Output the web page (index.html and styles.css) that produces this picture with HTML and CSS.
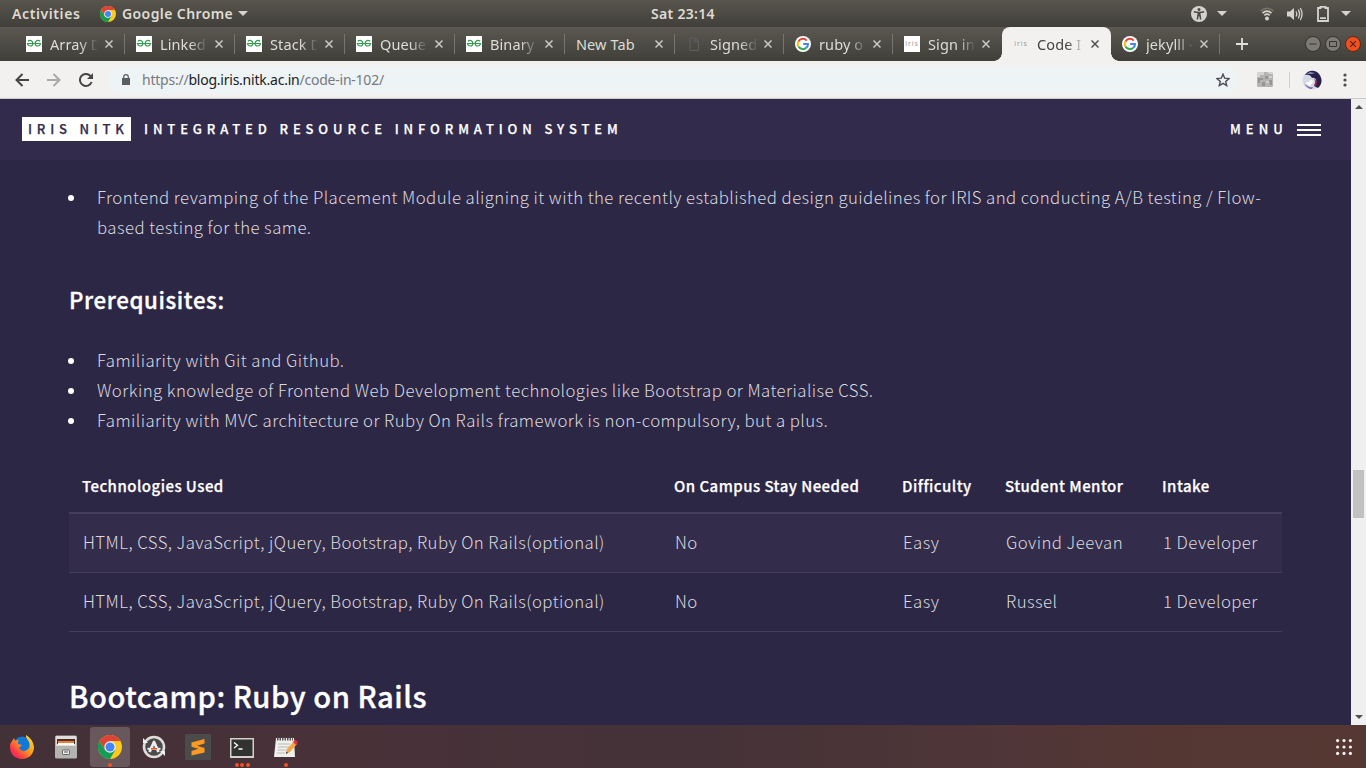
FILE: index.html
```html
<!DOCTYPE html>
<html lang="en">
<head>
<meta charset="utf-8">
<title>Code In 102</title>
<link rel="stylesheet" href="styles.css">
</head>
<body>
<svg class="defs" aria-hidden="true">
  <symbol id="chrome" viewBox="0 0 24 24">
    <circle cx="12" cy="12" r="12" fill="#fbc91f"/>
    <path d="M1.6 6A12 12 0 0 1 22.4 6H12L6.8 15Z" fill="#db4437"/>
    <path d="M1.6 6A12 12 0 0 0 12 24l5.2-9H6.8Z" fill="#129c58"/>
    <circle cx="12" cy="12" r="5.7" fill="#f3f3f3"/><circle cx="12" cy="12" r="4.5" fill="#4285f4"/>
  </symbol>
  <symbol id="gfg" viewBox="0 0 16 16">
    <path d="M0 0h16v16H0z" fill="#fff"/>
    <path d="M1.800 5.200c2-1.500 4.900-.9 5.100 2.100.1 1.700-1 2.700-2.500 2.700S1.700 9 1.500 7.500H14.500C14.300 9 13.100 10 11.600 10S9 9 9.100 7.300C9.300 4.300 12.200 3.700 14.200 5.200" fill="none" stroke="#339a4e" stroke-width="1.200"/>
  </symbol>
  <symbol id="google" viewBox="0 0 16 16">
    <circle cx="8" cy="8" r="8" fill="#fff"/>
    <g fill="none" stroke-width="2"><path d="M3.500 5.400A5 5 0 0 1 11.700 4.600" stroke="#ea4335"/><path d="M3.500 5.400a5 5 0 0 0 0 5.200" stroke="#fbbc05"/><path d="M3.500 10.600a5 5 0 0 0 7.800 1.200" stroke="#34a853"/><path d="M11.300 11.800A5 5 0 0 0 13 8H8.200" stroke="#4285f4"/></g>
  </symbol>
  <symbol id="close" viewBox="0 0 8 8"><path d="M.5.5l7 7m0-7l-7 7" fill="none" stroke="currentColor" stroke-width="1.500"/></symbol>
</svg>

<header class="topbar">
  <div class="topbar-left"><span class="activities">Activities</span><svg class="app-icon"><use href="#chrome"/></svg><span class="app-name">Google Chrome</span><i class="caret"></i></div>
  <div class="clock">Sat 23:14</div>
  <div class="tray">
    <svg width="16" height="16" viewBox="0 0 16 16"><circle cx="8" cy="8" r="8" fill="#d5d3cd"/><g fill="none" stroke="#4c4a44" stroke-width="1.500"><path d="M2.800 5.800Q8 7.300 13.200 5.800M6.300 13.500L7 9.500h2l.7 4"/><path d="M8 6v4" stroke-width="3"/></g><circle cx="8" cy="3.400" r="1.500" fill="#4c4a44"/></svg>
    <i class="caret"></i>
    <svg class="wifi" width="14" height="14" viewBox="0 0 14 14" fill="none" stroke="#d5d3cd" stroke-width="1.600"><path d="M.7 4.200Q7-1.700 13.300 4.200" stroke="#777568"/><path d="M2.500 6.200Q7 2 11.500 6.200M4.300 8.400Q7 6 9.700 8.400"/><circle cx="7" cy="11.500" r="1.200" fill="#d5d3cd"/></svg>
    <svg class="volume" width="16" height="14" viewBox="0 0 16 14"><path d="M0 4.500h3L7 1v12L3 9.500H0z" fill="#d5d3cd"/><path d="M9 4.500q1.500 2.500 0 5M11.300 2.700q2.500 4.300 0 8.600M13.300 1q3.500 6 0 12" fill="none" stroke="#d5d3cd" stroke-width="1.300"/></svg>
    <svg class="battery" width="12" height="16" viewBox="0 0 12 16"><path d="M3.500 2V.8h5V2H11v13H1V2zM3 12.200h6" fill="none" stroke="#d5d3cd" stroke-width="1.800"/></svg>
    <i class="caret"></i>
  </div>
</header>

<nav class="tabs">
  <div class="tab"><svg class="fav"><use href="#gfg"/></svg><span class="title">Array D</span><svg class="x"><use href="#close"/></svg></div>
  <div class="tab"><svg class="fav"><use href="#gfg"/></svg><span class="title">Linked</span><svg class="x"><use href="#close"/></svg></div>
  <div class="tab"><svg class="fav"><use href="#gfg"/></svg><span class="title">Stack D</span><svg class="x"><use href="#close"/></svg></div>
  <div class="tab"><svg class="fav"><use href="#gfg"/></svg><span class="title">Queue</span><svg class="x"><use href="#close"/></svg></div>
  <div class="tab"><svg class="fav"><use href="#gfg"/></svg><span class="title">Binary</span><svg class="x"><use href="#close"/></svg></div>
  <div class="tab"><span class="title full">New Tab</span><svg class="x"><use href="#close"/></svg></div>
  <div class="tab narrow"><svg class="fav" viewBox="0 0 16 16"><path d="M4 2h5l3.500 3.500V14.500H4zM9 2v3.500h3.500" fill="none" stroke="#5f5f60"/></svg><span class="title">Signed</span><svg class="x"><use href="#close"/></svg></div>
  <div class="tab narrow"><svg class="fav"><use href="#google"/></svg><span class="title">ruby o</span><svg class="x"><use href="#close"/></svg></div>
  <div class="tab narrow last"><span class="fav iris white">iris</span><span class="title">Sign in</span><svg class="x"><use href="#close"/></svg></div>
  <div class="tab narrow active"><span class="fav iris">iris</span><span class="title">Code I</span><svg class="x"><use href="#close"/></svg></div>
  <div class="tab narrow"><svg class="fav"><use href="#google"/></svg><span class="title">jekylll -</span><svg class="x"><use href="#close"/></svg></div>
  <svg class="plus" viewBox="0 0 12 12"><path d="M6 0v12M0 6h12" stroke="#e3e1da" stroke-width="1.800"/></svg>
  <div class="window-buttons">
    <svg viewBox="0 0 16 16"><circle cx="8" cy="8" r="7.500" fill="#7d7b73" stroke="#35342f"/><path d="M4.500 8h7" stroke="#35342f"/></svg>
    <svg viewBox="0 0 16 16"><circle cx="8" cy="8" r="7.500" fill="#7d7b73" stroke="#35342f"/><path d="M4.500 5.500h7v5h-7z" fill="none" stroke="#35342f"/></svg>
    <svg viewBox="0 0 16 16"><circle cx="8" cy="8" r="7.500" fill="#f0501e" stroke="#5a2b19"/><path d="M5.200 5.200l5.600 5.600m0-5.600l-5.600 5.600" stroke="#542313" stroke-width="1.200"/></svg>
  </div>
</nav>

<div class="toolbar">
  <svg class="back" viewBox="0 0 14 14"><path d="M14 7H1.500M7.500 1L1.500 7l6 6" fill="none" stroke="#454545" stroke-width="2"/></svg>
  <svg class="forward" viewBox="0 0 14 14"><path d="M0 7h12.500M6.500 1l6 6-6 6" fill="none" stroke="#aaa9a7" stroke-width="2"/></svg>
  <svg class="reload" viewBox="0 0 14 14"><path d="M12.600 9A6 6 0 1 1 11.400 2.900L13 4.500" fill="none" stroke="#454545" stroke-width="2"/><path d="M14 0v6H8z" fill="#454545"/></svg>
  <div class="omnibox">
    <svg class="lock" viewBox="0 0 8 11"><path d="M0 4h8v7H0z" fill="#5a5d62"/><path d="M1.700 4.500V3a2.300 2.300 0 0 1 4.600 0v1.500" fill="none" stroke="#5a5d62" stroke-width="1.200"/></svg>
    <span class="url">https://<b>blog.iris.nitk.ac.in</b>/code-in-102/</span>
    <svg class="star" viewBox="0 0 14 14"><path d="M7 1.200l1.700 4 4.300.4-3.300 2.800 1 4.200L7 10.400l-3.700 2.200 1-4.200L1 5.600l4.300-.4z" fill="none" stroke="#4b4e53" stroke-width="1.400"/></svg>
  </div>
  <svg class="extension" viewBox="0 0 16 15"><rect width="16" height="15" rx="1.500" fill="#b5b4b2"/><path d="M0 0h7v3H3v2H0zM10 0h6v2h-4z" fill="#d5d4d2"/><path d="M1 6h5v2H3v3H1zM8 4h3v3H8zM12 8h3v5h-2zM5 10h3v4H5z" fill="#969593"/><path d="M9 9h3v2H9zM12 4h3v2h-3z" fill="#d0cfcd"/></svg>
  <i class="divider"></i>
  <svg class="avatar" viewBox="0 0 20 20"><circle cx="10" cy="10" r="9.500" fill="#d5d9e6"/><path d="M3 5C6 0 13-1 17 4c4 5 3 11-1 14l-4-2 2-3c1-3-1-6-4-5-1-3-4-4-7-3z" fill="#27204a"/><path d="M11 7l4 5-1 4-2-1c2-3 1-5-1-8z" fill="#b51f4e"/><path d="M5 4l3-2 5 1-3 1z" fill="#8e88b8"/><path d="M7 12c1-3 4-3 4 0l-3 4-5-3" fill="#fff"/><path d="M2 13q4 5 9 4l-1 2Q5 19 2 13" fill="#7271a0"/></svg>
  <svg class="kebab" viewBox="0 0 4 14" fill="#4a4b4e"><circle cx="2" cy="2" r="1.600"/><circle cx="2" cy="7" r="1.600"/><circle cx="2" cy="12" r="1.600"/></svg>
</div>

<div class="viewport">
  <main class="page">
    <header class="site-header">
      <span class="brand">IRIS NITK</span><span class="brand-sub">INTEGRATED RESOURCE INFORMATION SYSTEM</span>
      <span class="menu">MENU</span><svg class="burger" viewBox="0 0 24 12"><path d="M0 1h24M0 6h24M0 11h24" stroke="#fff" stroke-width="2"/></svg>
    </header>
    <article class="content">
      <ul class="list">
        <li>Frontend revamping of the Placement Module aligning it with the recently established design guidelines for IRIS and conducting A/B testing / Flow-<br>based testing for the same.</li>
      </ul>
      <h3>Prerequisites:</h3>
      <ul class="list">
        <li>Familiarity with Git and Github.</li>
        <li>Working knowledge of Frontend Web Development technologies like Bootstrap or Materialise CSS.</li>
        <li>Familiarity with MVC architecture or Ruby On Rails framework is non-compulsory, but a plus.</li>
      </ul>
      <table>
        <colgroup><col class="c1"><col class="c2"><col class="c3"><col class="c4"><col class="c5"></colgroup>
        <thead><tr><th>Technologies Used</th><th>On Campus Stay Needed</th><th>Difficulty</th><th>Student Mentor</th><th>Intake</th></tr></thead>
        <tbody>
          <tr><td>HTML, CSS, JavaScript, jQuery, Bootstrap, Ruby On Rails(optional)</td><td>No</td><td>Easy</td><td>Govind Jeevan</td><td>1 Developer</td></tr>
          <tr><td>HTML, CSS, JavaScript, jQuery, Bootstrap, Ruby On Rails(optional)</td><td>No</td><td>Easy</td><td>Russel</td><td>1 Developer</td></tr>
        </tbody>
      </table>
      <h2>Bootcamp: Ruby on Rails</h2>
    </article>
  </main>
  <div class="scrollbar"><i class="arrow up"></i><i class="thumb"></i><i class="arrow down"></i></div>
</div>

<footer class="dock">
  <div class="app"><svg viewBox="0 0 24 24"><defs><linearGradient id="fox" x1="1" y1="0" x2="0" y2="1"><stop offset="0" stop-color="#ffe735"/><stop offset=".45" stop-color="#ff9a1c"/><stop offset=".75" stop-color="#ff3647"/><stop offset="1" stop-color="#e3118a"/></linearGradient></defs><circle cx="12.500" cy="11" r="9.500" fill="#1278d8"/><path d="M2 6l2-3 1 3q2-1 4-1-2 2-1 4l4 1-3 3q3 5 8 2 4-3 2-8l-3-5V0q7 4 8 12c0 7-5 12-12 12S0 19 0 12q0-4 2-6z" fill="url(#fox)"/></svg></div>
  <div class="app"><svg viewBox="0 0 24 24"><rect x="1" y=".5" width="22" height="23" rx="1.500" fill="#b4b4b1"/><path d="M2 1h20v10H2z" fill="#dedddb"/><path d="M3 4h18v5H3z" fill="#4a3027"/><path d="M4 6h16v3H4z" fill="#f07b35"/><path d="M4 8h16v2H4z" fill="#fff"/><rect x="8.500" y="15" width="7" height="4.500" rx=".7" fill="#eee" stroke="#666"/><path d="M10 17h4" stroke="#555"/></svg></div>
  <div class="app current"><svg><use href="#chrome"/></svg><span class="dots"><i></i></span></div>
  <div class="app"><svg viewBox="0 0 24 24"><circle cx="12" cy="12" r="10" fill="#4b4b4b" stroke="#deddda" stroke-width="2.600"/><path d="M7.500 17l4.500-10 4.500 10" fill="none" stroke="#eee" stroke-width="2.800" stroke-linejoin="round"/><path d="M5.500 13.800h13" stroke="#eee" stroke-width="2"/><path d="M9 13.800h6" stroke="#e95420" stroke-width="1.500"/><path d="M1 3v5h5zM23 21v-5h-5z" fill="#eee"/></svg></div>
  <div class="app"><svg class="large" viewBox="0 0 26 26"><rect width="26" height="26" rx="1" fill="#4b4b4b"/><path d="M6.500 8.500L19.500 5v4.500l-7.500 2.300 7.500 2.200v4.500L6.500 21.500V17l7-2.200-7-2z" fill="#ff9a20"/></svg></div>
  <div class="app"><svg viewBox="0 0 24 20" class="terminal"><path d="M0 0h24v20H0z" fill="#d2d1ce"/><path d="M1.500 1.500h21v16.500h-21z" fill="#30332f"/><path d="M4 4.500l3.500 2.800L4 10M8.500 11h4" fill="none" stroke="#fff" stroke-width="1.300"/></svg><span class="dots"><i></i><i></i><i></i></span></div>
  <div class="app"><svg viewBox="0 0 24 24"><path d="M2 3h18l1 19H0z" fill="#efefec"/><path d="M3 4h16" stroke="#555" stroke-width="3" stroke-dasharray="1.500 1"/><path d="M4 9h12M4 12h11M3.500 15h9M3 18h8" stroke="#bdbcb9"/><path d="M12 19l1-5 7-8 3 3-7 8z" fill="#f3a747"/><path d="M19 7l2-2.500 3 2.500-2 3z" fill="#dc3346"/><path d="M12 19l.5-2.500 1.500 1.200z" fill="#333"/></svg><span class="dots"><i></i></span></div>
  <svg class="apps-grid" viewBox="0 0 16 16" fill="#f3f0ed"><circle cx="1.600" cy="1.600" r="1.600"/><circle cx="8" cy="1.600" r="1.600"/><circle cx="14.400" cy="1.600" r="1.600"/><circle cx="1.600" cy="8" r="1.600"/><circle cx="8" cy="8" r="1.600"/><circle cx="14.400" cy="8" r="1.600"/><circle cx="1.600" cy="14.400" r="1.600"/><circle cx="8" cy="14.400" r="1.600"/><circle cx="14.400" cy="14.400" r="1.600"/></svg>
</footer>
</body>
</html>
```
FILE: styles.css
```css
* { box-sizing: border-box; }
body { margin: 0; width: 1366px; height: 768px; overflow: hidden; display: flex; flex-direction: column; font-family: "Noto Sans", sans-serif; }
svg { display: block; flex: none; }
.defs { display: none; }

/* desktop top bar */
.topbar { height: 27px; display: grid; grid-template-columns: 1fr auto 1fr; align-items: center; background: linear-gradient(#58554d, #403f3a); color: #dfdbd2; font-size: 14px; font-weight: 600; line-height: 27px; }
.topbar-left { display: flex; align-items: center; padding-left: 12px; }
.activities { width: 88px; letter-spacing: .6px; }
.app-icon { width: 16px; height: 16px; margin-right: 6px; }
.app-name { width: 116px; letter-spacing: .4px; }
.clock { letter-spacing: .3px; }
.caret { border: 5px solid transparent; border-top-color: #d5d3cd; border-bottom: 0; }
.tray { display: flex; align-items: center; justify-content: flex-end; padding-right: 15px; }
.tray .caret { margin-left: 10px; }
.wifi { margin-left: 33px; }
.volume { margin-left: 13px; }
.battery { margin-left: 14px; }
.tray .battery + .caret { margin-left: 12px; }

/* tab strip */
.tabs { height: 34px; display: flex; align-items: center; padding-left: 15px; background: linear-gradient(#5a5850, #403f3a); color: #dedcd5; font-size: 14.500px; letter-spacing: .1px; }
.tab { width: 110px; height: 34px; flex: none; display: flex; align-items: center; padding-left: 11px; position: relative; }
.tab.narrow { width: 109px; }
.tab:not(.active):not(.last)::after { content: ""; position: absolute; right: 0; top: 7px; height: 20px; width: 1px; background: #78766c; }
.fav { width: 16px; height: 16px; margin-right: 8px; }
.title { width: 54px; white-space: nowrap; line-height: 34px; -webkit-mask-image: linear-gradient(90deg, #000 30px, transparent 48px); mask-image: linear-gradient(90deg, #000 30px, transparent 48px); }
.title.full { width: 78px; -webkit-mask-image: none; mask-image: none; }
.x { width: 8px; height: 8px; margin-left: 1px; color: #cbc9c1; }
.narrow .x { margin-left: 0; }
.iris { color: #999; font: 7px/15px "Noto Sans", sans-serif; letter-spacing: .9px; text-align: center; }
.iris.white { background: #fff; }
.active { background: #f2f1f0; border-radius: 8px 8px 0 0; color: #424242; }
.active::before, .active::after { content: ""; position: absolute; bottom: 0; width: 8px; height: 8px; }
.active::before { left: -8px; background: radial-gradient(circle at 0 0, transparent 7.5px, #f2f1f0 8px); }
.active::after { right: -8px; background: radial-gradient(circle at 100% 0, transparent 7.5px, #f2f1f0 8px); }
.active .x { color: #505050; }
.plus { width: 12px; height: 12px; margin-left: 16px; }
.window-buttons { display: flex; gap: 4px; margin-left: auto; padding-right: 5px; }
.window-buttons svg { width: 16px; height: 16px; }

/* browser toolbar */
.toolbar { height: 38px; display: flex; align-items: center; padding-left: 15px; background: #f2f1f0; border-bottom: 1px solid #c8cbc8; }
.back, .forward, .reload { width: 14px; height: 14px; }
.forward { margin-left: 18px; }
.reload { margin-left: 18px; }
.omnibox { width: 1131px; height: 28px; margin-left: 15px; padding: 0 9px 0 14px; display: flex; align-items: center; border-radius: 14px; background: #eef3f5; }
.lock { width: 8px; height: 11px; }
.url { margin-left: 12px; color: #777a7e; font-size: 14px; letter-spacing: -.230px; line-height: 28px; }
.url b { color: #202124; font-weight: 400; }
.star { width: 14px; height: 14px; margin-left: auto; }
.extension { width: 16px; height: 15px; margin-left: 18px; }
.divider { width: 1px; height: 16px; margin-left: 16px; background: #cfcecc; }
.avatar { width: 20px; height: 20px; margin-left: 12px; }
.kebab { width: 4px; height: 14px; margin-left: 21px; }

/* web page */
.viewport { height: 626px; display: flex; }
.page { width: 1351px; background: #2d2746; color: #dad9df; font-family: "Noto Sans CJK JP", sans-serif; }
.site-header { height: 61px; display: flex; align-items: center; padding: 0 30px 0 22px; background: #322b4c; color: #fff; font-size: 13px; font-weight: 500; letter-spacing: 4.880px; white-space: nowrap; -webkit-text-stroke: .25px currentColor; }
.brand { width: 109px; height: 24px; margin-bottom: 2px; padding-left: 6px; background: #fff; color: #332c4d; line-height: 24px; letter-spacing: 4.800px; }
.brand-sub { margin: 0 0 2px 13px; }
.menu { margin: 0 9px 2px auto; letter-spacing: 5.100px; }
.burger { width: 24px; height: 12px; }
.content { padding: 22px 69px 0; }
.list { list-style: none; margin: 0; padding: 0 0 0 28px; font-size: 16.800px; font-weight: 300; letter-spacing: .44px; line-height: 30px; white-space: nowrap; }
.list li { position: relative; }
.list li::before { content: ""; position: absolute; left: -29px; top: 13px; width: 6px; height: 6px; border-radius: 50%; background: #fff; }
h2, h3 { color: #fff; font-weight: 500; margin: 0; white-space: nowrap; -webkit-text-stroke: .35px #fff; }
h3 { margin: 39px 0 28px; font-size: 22.300px; line-height: 36px; letter-spacing: .6px; }
table { width: 1213px; margin-top: 25px; border-collapse: collapse; table-layout: fixed; }
.c1 { width: 592px; } .c2 { width: 228px; } .c3 { width: 103px; } .c4 { width: 157px; } .c5 { width: 133px; }
th, td { padding: 0 0 0 13px; text-align: left; white-space: nowrap; }
th { height: 53px; padding-bottom: 2px; color: #fff; font-size: 15px; font-weight: 500; letter-spacing: .46px; border-bottom: 2px solid #443e5b; -webkit-text-stroke: .25px #fff; }
td { height: 59px; padding: 0 0 2px 14px; font-size: 16.800px; font-weight: 300; letter-spacing: .43px; border-bottom: 1px solid #433d59; }
tbody tr:first-child { background: #332d4b; }
h2 { margin-top: 40px; font-size: 29.200px; line-height: 46px; letter-spacing: .52px; }

.scrollbar { width: 15px; background: #f0f0f0; display: flex; flex-direction: column; align-items: center; padding: 6px 0; }
.arrow { border: 4px solid transparent; }
.up { border-top: 0; border-bottom-color: #505050; }
.down { border-bottom: 0; border-top-color: #505050; margin-top: auto; }
.thumb { width: 11px; height: 48px; margin-top: 361px; background: #c1c1c1; }

/* launcher dock */
.dock { height: 43px; display: flex; align-items: center; gap: 4px; padding: 2px 14px 1px 2px; background: linear-gradient(90deg, #433138, #493138 25%, #443238 50%, #503637 75%, #543733 85%, #553832); }
.app { width: 40px; height: 40px; flex: none; display: flex; align-items: center; justify-content: center; position: relative; border-radius: 3px; }
.app svg { width: 24px; height: 24px; }
.app svg.large { width: 26px; height: 26px; }
.app svg.terminal { height: 20px; margin-top: 2px; }
.current { background: #68575b; }
.dots { position: absolute; bottom: 0; left: 0; right: 0; display: flex; justify-content: center; gap: 1.500px; }
.dots i { width: 4px; height: 4px; border-radius: 50%; background: #ef5524; }
.apps-grid { width: 16px; height: 16px; margin-left: auto; }
```
